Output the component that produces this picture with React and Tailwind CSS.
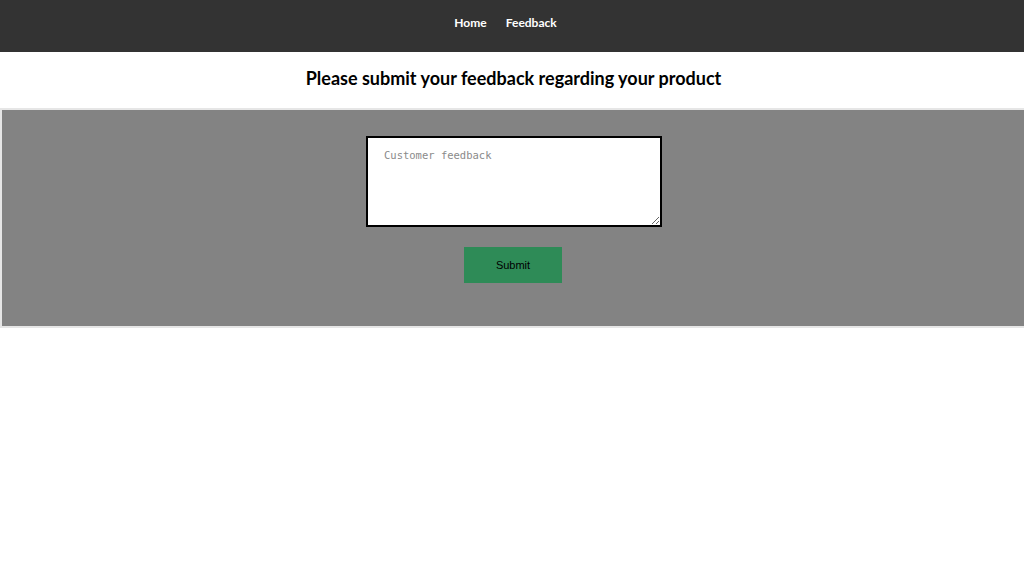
export default function App() {
  return (
    <div className="w-[1024px] min-h-[580px] bg-white" style={{ fontFamily: "Lato, 'Liberation Sans', sans-serif" }}>
      <nav className="h-[52px] bg-[#333333] flex items-start justify-center gap-[19px] pt-[15px] pr-[13px]">
        <a className="text-white font-bold text-[12px] leading-[15px]">Home</a>
        <a className="text-white font-bold text-[12px] leading-[15px]">Feedback</a>
      </nav>
      <div className="h-[56px] flex items-center justify-center">
        <h2 className="text-[18px] font-bold text-black leading-none pb-[4px] pl-[3px]">Please submit your feedback regarding your product</h2>
      </div>
      <div className="h-[220px] bg-[#838383] border-t-2 border-l-2 border-b-2 border-[#e6e6e6] flex flex-col items-center pt-[26px]">
        <textarea
          placeholder="Customer feedback"
          className="w-[296px] h-[91px] bg-white border-2 border-black px-[16px] py-[10px] text-[10.5px] text-black placeholder:text-[#8a8a8a] outline-none ml-[2px]"
          style={{ fontFamily: "'DejaVu Sans Mono', monospace" }}
        />
        <button
          className="mt-[20px] w-[98px] h-[36px] bg-[#2e8b57] text-black text-[11px]"
          style={{ fontFamily: "'Liberation Sans', Arial, sans-serif" }}
        >
          Submit
        </button>
      </div>
    </div>
  );
}
